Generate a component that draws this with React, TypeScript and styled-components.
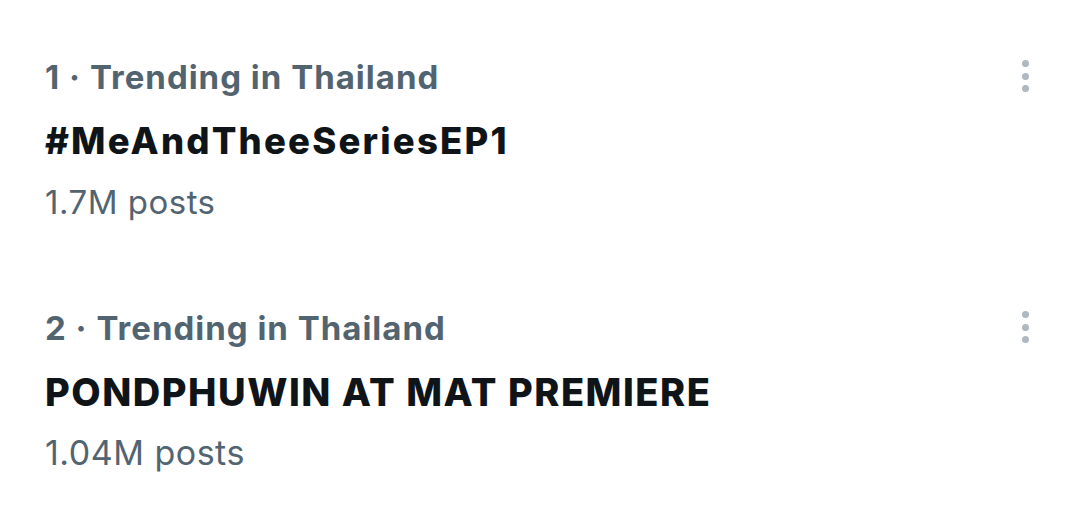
import React from "react";
import styled, { createGlobalStyle } from "styled-components";

const GlobalStyle = createGlobalStyle`
  html, body { margin: 0; padding: 0; background: #ffffff; }
  body { font-family: Inter, Roboto, "Noto Sans", "Liberation Sans", sans-serif; }
`;

const Page = styled.div`
  width: 1080px;
  height: 523px;
  background: #ffffff;
  padding: 45px 0 0 45px;
  box-sizing: border-box;
  display: flex;
  flex-direction: column;
  gap: 66px;
`;

const Trend = styled.div`
  display: flex;
  justify-content: space-between;
  align-items: flex-start;
  width: 987px;
`;

const Content = styled.div`
  display: flex;
  flex-direction: column;
`;

const Meta = styled.div`
  color: #536471;
  font-weight: 700;
  font-size: 33px;
  line-height: 64px;
  letter-spacing: 1px;
  white-space: nowrap;
`;

const Title = styled.div<{ $size: number; $spacing: number }>`
  color: #0f1419;
  font-weight: 800;
  font-size: ${(p) => p.$size}px;
  line-height: 65px;
  letter-spacing: ${(p) => p.$spacing}em;
  white-space: nowrap;
`;

const Posts = styled.div<{ $size: number }>`
  color: #536471;
  font-weight: 400;
  font-size: ${(p) => p.$size}px;
  line-height: 56px;
  letter-spacing: 0.5px;
  white-space: nowrap;
`;

const More = styled.div`
  width: 14px;
  display: flex;
  flex-direction: column;
  align-items: center;
  gap: 5.5px;
  margin-top: 15px;
`;

const Dot = styled.span`
  width: 7px;
  height: 7px;
  border-radius: 50%;
  background: #aeb8c0;
`;

const items = [
  {
    rank: 1,
    title: "#MeAndTheeSeriesEP1",
    posts: "1.7M posts",
    titleSize: 36.5,
    titleSpacing: 0.06,
    postsSize: 33,
  },
  {
    rank: 2,
    title: "PONDPHUWIN AT MAT PREMIERE",
    posts: "1.04M posts",
    titleSize: 38,
    titleSpacing: 0.04,
    postsSize: 34,
  },
];

export default function App() {
  return (
    <>
      <GlobalStyle />
      <Page>
        {items.map((it) => (
          <Trend key={it.rank}>
            <Content>
              <Meta>{it.rank} · Trending in Thailand</Meta>
              <Title $size={it.titleSize} $spacing={it.titleSpacing}>
                {it.title}
              </Title>
              <Posts $size={it.postsSize}>{it.posts}</Posts>
            </Content>
            <More>
              <Dot />
              <Dot />
              <Dot />
            </More>
          </Trend>
        ))}
      </Page>
    </>
  );
}
